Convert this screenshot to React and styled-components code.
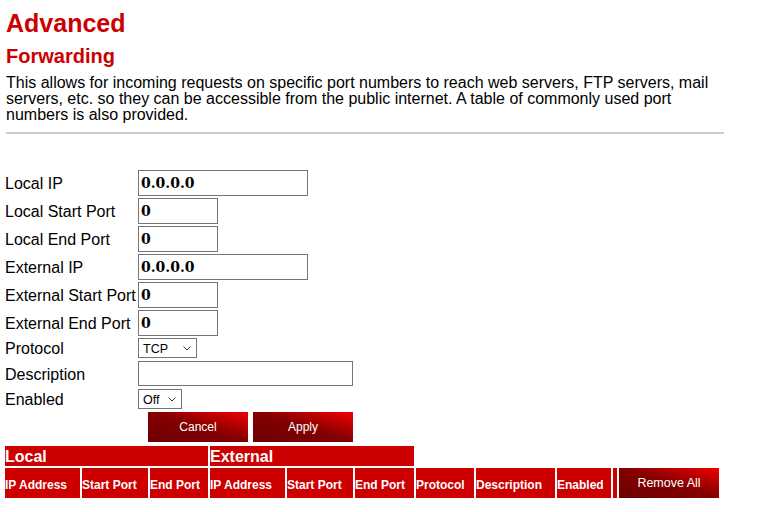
import React from "react";
import styled, { createGlobalStyle } from "styled-components";

const GlobalStyle = createGlobalStyle`
  html, body { margin: 0; padding: 0; background: #fff; }
  body {
    font-family: "Liberation Sans", Arial, sans-serif;
    color: #000;
  }
  * { box-sizing: border-box; }
`;

const RED = "#cc0000";

const Page = styled.div`
  padding: 9px 0 0 5px;
  width: 758px;
`;

const Header = styled.header`
  padding-left: 1px;
`;

const Title = styled.h1`
  margin: 0;
  font-size: 25px;
  line-height: 28px;
  font-weight: bold;
  color: ${RED};
`;

const Subtitle = styled.h2`
  margin: 8px 0 0;
  font-size: 20px;
  line-height: 23px;
  font-weight: bold;
  color: ${RED};
`;

const Intro = styled.p`
  margin: 7px 0 0;
  width: 718px;
  font-size: 16px;
  line-height: 16px;
  color: #000;
`;

const Divider = styled.hr`
  margin: 9px 0 0;
  width: 718px;
  height: 2px;
  border: 0;
  background: #cccccc;
`;

const Form = styled.form`
  margin-top: 36px;
  display: grid;
  grid-template-columns: 131px 215px;
  column-gap: 2px;
  row-gap: 2px;
  align-items: center;
  justify-items: start;
`;

const Label = styled.label`
  font-size: 16px;
  line-height: 18px;
  padding-top: 1px;
  white-space: nowrap;
  color: #000;
`;

const TextInput = styled.input`
  width: ${(p) => p.$w}px;
  height: ${(p) => p.$h || 26}px;
  margin: 0 0 ${(p) => (p.$h ? 26 - p.$h : 0)}px;
  padding: 0 2px;
  border: 1px solid #767676;
  border-radius: 0;
  background: #fff;
  color: #000;
  font-family: "DejaVu Serif", serif;
  font-weight: bold;
  font-size: 14px;
  outline: none;
`;

const SelectWrap = styled.span`
  position: relative;
  display: inline-block;
  width: ${(p) => p.$w}px;
  height: 20px;
  margin-bottom: 1px;
`;

const Select = styled.select`
  appearance: none;
  -webkit-appearance: none;
  display: block;
  width: 100%;
  height: 20px;
  margin: 0;
  padding: 2px 0 0 4px;
  border: 1px solid #767676;
  border-radius: 0;
  background-color: #fff;
  color: #000;
  font-family: "Liberation Sans", Arial, sans-serif;
  font-size: 12.5px;
  outline: none;
`;

const Chevron = styled.svg`
  position: absolute;
  right: 6px;
  top: 8px;
  width: 8px;
  height: 5px;
  pointer-events: none;
`;

const Actions = styled.div`
  grid-column: 2;
  justify-self: stretch;
  display: flex;
  justify-content: flex-end;
  gap: 5px;
`;

const RedButton = styled.button`
  width: 100px;
  height: 30px;
  padding: 0;
  border: 0;
  border-radius: 0;
  background: linear-gradient(to top right, #6e0000 0%, #820000 50%, #f00000 100%);
  color: #fff;
  font-family: "Liberation Sans", Arial, sans-serif;
  font-size: ${(p) => p.$size || 12}px;
  cursor: pointer;
`;

const RuleTable = styled.div`
  margin-top: 4px;
  display: grid;
  grid-template-columns: 75px 66px 58px 75px 66px 59px 58px 79px 54px 4px 100px;
  grid-template-rows: 20px 30px;
  gap: 2px;
`;

const GroupHead = styled.div`
  grid-column: span 3;
  display: flex;
  align-items: center;
  padding-top: 1px;
  background: ${RED};
  color: #fff;
  font-size: 16px;
  font-weight: bold;
  white-space: nowrap;
`;

const ColHead = styled.div`
  ${(p) => (p.$newRow ? "grid-column-start: 1;" : "")}
  display: flex;
  align-items: center;
  padding-top: 4px;
  background: ${RED};
  color: #fff;
  font-size: 12px;
  font-weight: bold;
  white-space: nowrap;
  overflow: hidden;
`;

const columns = [
  "IP Address",
  "Start Port",
  "End Port",
  "IP Address",
  "Start Port",
  "End Port",
  "Protocol",
  "Description",
  "Enabled",
  "",
];

const fields = [
  { label: "Local IP", value: "0.0.0.0", w: 170 },
  { label: "Local Start Port", value: "0", w: 80 },
  { label: "Local End Port", value: "0", w: 80 },
  { label: "External IP", value: "0.0.0.0", w: 170 },
  { label: "External Start Port", value: "0", w: 80 },
  { label: "External End Port", value: "0", w: 80 },
];

function Dropdown({ width, value, options }) {
  return (
    <SelectWrap $w={width}>
      <Select defaultValue={value}>
        {options.map((o) => (
          <option key={o}>{o}</option>
        ))}
      </Select>
      <Chevron viewBox="0 0 8 5" aria-hidden="true">
        <path d="M0.5 0.5 L4 4 L7.5 0.5" fill="none" stroke="#333" strokeWidth="1" />
      </Chevron>
    </SelectWrap>
  );
}

export default function App() {
  return (
    <>
      <GlobalStyle />
      <Page>
        <Header>
          <Title>Advanced</Title>
          <Subtitle>Forwarding</Subtitle>
          <Intro>
            This allows for incoming requests on specific port numbers to reach web servers, FTP
            servers, mail servers, etc. so they can be accessible from the public internet. A table
            of commonly used port numbers is also provided.
          </Intro>
          <Divider />
        </Header>

        <Form onSubmit={(e) => e.preventDefault()}>
          {fields.map((f) => (
            <React.Fragment key={f.label}>
              <Label>{f.label}</Label>
              <TextInput $w={f.w} defaultValue={f.value} />
            </React.Fragment>
          ))}
          <Label>Protocol</Label>
          <Dropdown width={59} value="TCP" options={["TCP", "UDP", "Both"]} />
          <Label>Description</Label>
          <TextInput $w={215} $h={25} defaultValue="" />
          <Label>Enabled</Label>
          <Dropdown width={44} value="Off" options={["Off", "On"]} />
          <Actions>
            <RedButton type="button">Cancel</RedButton>
            <RedButton type="submit">Apply</RedButton>
          </Actions>
        </Form>

        <RuleTable>
          <GroupHead>Local</GroupHead>
          <GroupHead>External</GroupHead>
          {columns.map((c, i) => (
            <ColHead key={i} $newRow={i === 0}>
              {c}
            </ColHead>
          ))}
          <RedButton type="button" $size={12.5}>
            Remove All
          </RedButton>
        </RuleTable>
      </Page>
    </>
  );
}
